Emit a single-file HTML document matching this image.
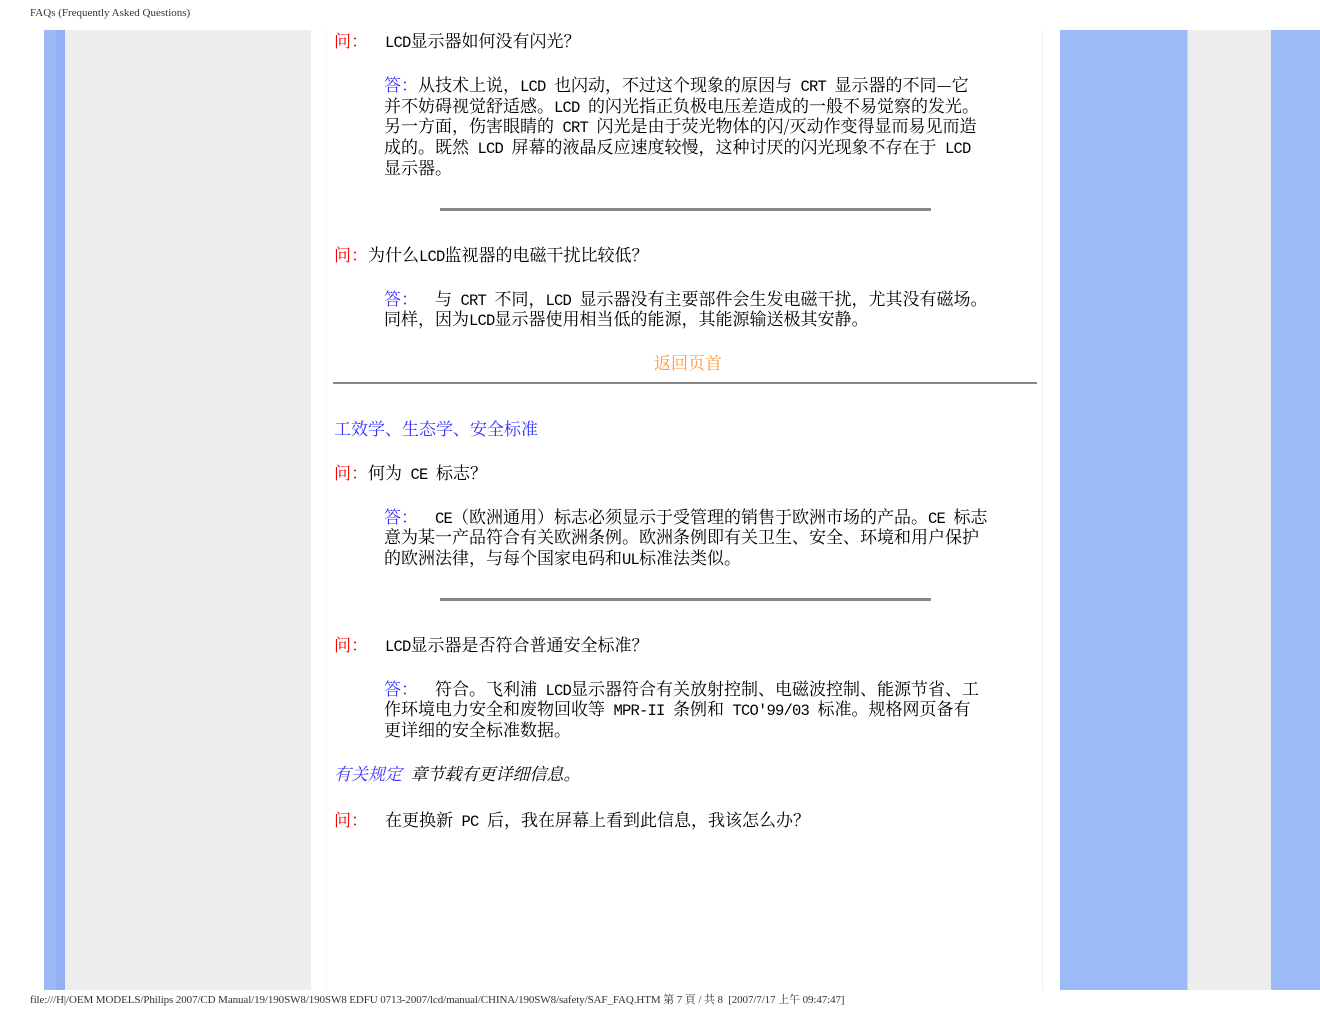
<!DOCTYPE html>
<html><head><meta charset="utf-8"><style>
body{margin:0;width:1320px;height:1020px;position:relative;background:#fff;overflow:hidden;font-family:"Noto Serif CJK SC","Noto Sans CJK SC",serif;}
.b{position:absolute}
.t{position:absolute;white-space:pre;font-size:17px;line-height:22px;color:#000}
.m{font-family:"Liberation Mono",monospace;font-size:15.5px;letter-spacing:-0.8px}
.p{display:inline-block;width:1em;text-align:left}
.q{color:#f00}.a{color:#33f}
.hr{position:absolute;height:3px;background:#888}
</style></head><body>
<div class="t" style="left:30px;top:6px;font-size:11px;line-height:14px;color:#333;font-family:'Liberation Serif',serif">FAQs (Frequently Asked Questions)</div>
<div class="b" style="left:44px;top:30px;width:12px;height:960px;background:#9bb9f7"></div>
<div class="b" style="left:56px;top:30px;width:9px;height:960px;background:#92b1f5"></div>
<div class="b" style="left:65px;top:30px;width:246px;height:960px;background:#ededed"></div>
<div class="b" style="left:326px;top:30px;width:1px;height:960px;background:#f6f6fb"></div>
<div class="b" style="left:1042px;top:30px;width:1px;height:960px;background:#eeeefb"></div>
<div class="b" style="left:1060px;top:30px;width:127px;height:960px;background:#9bbbf8"></div>
<div class="b" style="left:1187px;top:30px;width:1px;height:960px;background:#c8d6f0"></div>
<div class="b" style="left:1188px;top:30px;width:83px;height:960px;background:#ededed"></div>
<div class="b" style="left:1271px;top:30px;width:49px;height:960px;background:#9bbbf8"></div>

<div class="t" style="left:334px;top:29px"><span class="q">问<span class="p">：</span></span><span class="m">  LCD</span>显示器如何没有闪光<span class="p">？</span></div>
<div class="t" style="left:384px;top:73px"><span class="a">答<span class="p">：</span></span>从技术上说<span class="p">，</span><span class="m">LCD </span>也闪动<span class="p">，</span>不过这个现象的原因与<span class="m"> CRT </span>显示器的不同—它</div>
<div class="t" style="left:384px;top:94px">并不妨碍视觉舒适感。<span class="m">LCD </span>的闪光指正负极电压差造成的一般不易觉察的发光。</div>
<div class="t" style="left:384px;top:114px">另一方面<span class="p">，</span>伤害眼睛的<span class="m"> CRT </span>闪光是由于荧光物体的闪/灭动作变得显而易见而造</div>
<div class="t" style="left:384px;top:135px">成的。既然<span class="m"> LCD </span>屏幕的液晶反应速度较慢<span class="p">，</span>这种讨厌的闪光现象不存在于<span class="m"> LCD</span></div>
<div class="t" style="left:384px;top:156px">显示器。</div>
<div class="hr" style="left:440px;top:208px;width:491px"></div>

<div class="t" style="left:334px;top:243px"><span class="q">问<span class="p">：</span></span>为什么<span class="m">LCD</span>监视器的电磁干扰比较低<span class="p">？</span></div>
<div class="t" style="left:384px;top:287px"><span class="a">答<span class="p">：</span></span><span class="m">  </span>与<span class="m"> CRT </span>不同<span class="p">，</span><span class="m">LCD </span>显示器没有主要部件会生发电磁干扰<span class="p">，</span>尤其没有磁场。</div>
<div class="t" style="left:384px;top:307px">同样<span class="p">，</span>因为<span class="m">LCD</span>显示器使用相当低的能源<span class="p">，</span>其能源输送极其安静。</div>
<div class="t" style="left:654px;top:351px;color:#f93">返回页首</div>
<div class="hr" style="left:333px;top:382px;width:704px;height:2px"></div>

<div class="t" style="left:334px;top:417px;color:#33f">工效学、生态学、安全标准</div>
<div class="t" style="left:334px;top:461px"><span class="q">问<span class="p">：</span></span>何为<span class="m"> CE </span>标志<span class="p">？</span></div>
<div class="t" style="left:384px;top:505px"><span class="a">答<span class="p">：</span></span><span class="m">  CE</span>（欧洲通用）标志必须显示于受管理的销售于欧洲市场的产品。<span class="m">CE </span>标志</div>
<div class="t" style="left:384px;top:525px">意为某一产品符合有关欧洲条例。欧洲条例即有关卫生、安全、环境和用户保护</div>
<div class="t" style="left:384px;top:546px">的欧洲法律<span class="p">，</span>与每个国家电码和<span class="m">UL</span>标准法类似。</div>
<div class="hr" style="left:440px;top:598px;width:491px"></div>

<div class="t" style="left:334px;top:633px"><span class="q">问<span class="p">：</span></span><span class="m">  LCD</span>显示器是否符合普通安全标准<span class="p">？</span></div>
<div class="t" style="left:384px;top:677px"><span class="a">答<span class="p">：</span></span><span class="m">  </span>符合。飞利浦<span class="m"> LCD</span>显示器符合有关放射控制、电磁波控制、能源节省、工</div>
<div class="t" style="left:384px;top:697px">作环境电力安全和废物回收等<span class="m"> MPR-II </span>条例和<span class="m"> TCO'99/03 </span>标准。规格网页备有</div>
<div class="t" style="left:384px;top:718px">更详细的安全标准数据。</div>
<div class="t" style="left:334px;top:762px;font-style:italic"><span class="a">有关规定</span><span class="m"> </span>章节载有更详细信息。</div>
<div class="t" style="left:334px;top:808px"><span class="q">问<span class="p">：</span></span><span class="m">  </span>在更换新<span class="m"> PC </span>后<span class="p">，</span>我在屏幕上看到此信息<span class="p">，</span>我该怎么办<span class="p">？</span></div>

<div class="t" style="left:30px;top:993px;font-size:11px;line-height:14px;color:#333;font-family:'Liberation Serif','Noto Serif CJK SC',serif;letter-spacing:-0.1px">file:///H|/OEM MODELS/Philips 2007/CD Manual/19/190SW8/190SW8 EDFU 0713-2007/lcd/manual/CHINA/190SW8/safety/SAF_FAQ.HTM 第 7 頁 / 共 8  [2007/7/17 上午 09:47:47]</div>
</body></html>
